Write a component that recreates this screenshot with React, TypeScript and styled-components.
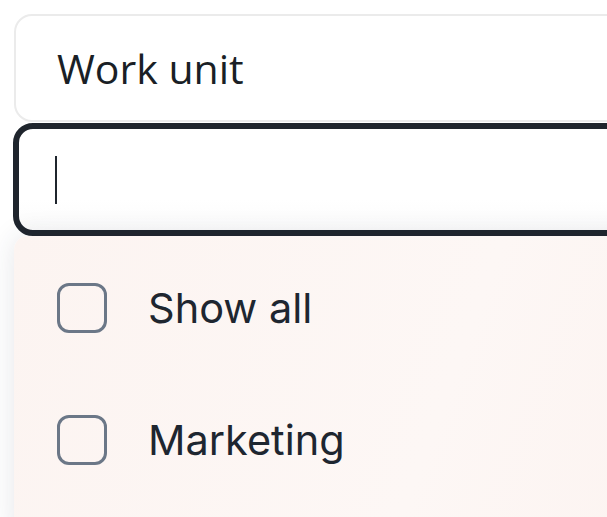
import { createGlobalStyle, styled } from 'styled-components';

const GlobalStyle = createGlobalStyle`
  html, body {
    margin: 0;
    padding: 0;
    background: #ffffff;
    overflow: hidden;
  }
`;

const Page = styled.div`
  display: flex;
  flex-direction: column;
  width: 720px;
  padding: 14px 0 0 14px;
  box-sizing: border-box;
  font-family: Inter, 'Noto Sans', sans-serif;
  color: #1e2630;
`;

const Header = styled.div`
  display: flex;
  align-items: center;
  height: 108px;
  padding-left: 41px;
  box-sizing: border-box;
  border: 2px solid #ebebeb;
  border-radius: 18px;
  background: #ffffff;
  font-family: 'Open Sans', 'Noto Sans', sans-serif;
  font-size: 41px;
  color: #1a1f26;
`;

const SearchBox = styled.div`
  display: flex;
  align-items: center;
  height: 113px;
  margin: 1px 0 0 -1px;
  padding-left: 36px;
  box-sizing: border-box;
  border: 6px solid #1f252d;
  border-radius: 20px;
  background: linear-gradient(#ffffff 70%, #fbfbfb);
`;

const Caret = styled.span`
  width: 1.5px;
  height: 48px;
  background: #1f252d;
`;

const Panel = styled.div`
  display: flex;
  flex-direction: column;
  gap: 82px;
  height: 300px;
  padding: 47px 0 0 43px;
  box-sizing: border-box;
  border-radius: 14px 0 0 0;
  background: linear-gradient(110deg, #fcf4f1, #fdf7f5 60%, #fcf3f0);
  box-shadow: 0 0 28px rgba(40, 50, 70, 0.12);
`;

const Option = styled.label`
  display: flex;
  align-items: center;
  gap: 41px;
  height: 50px;
  font-size: 41.5px;
  color: #1e2630;
`;

const Box = styled.span`
  width: 50px;
  height: 50px;
  box-sizing: border-box;
  border: 3.5px solid #6b7787;
  border-radius: 12px;
  flex-shrink: 0;
`;

const options = ['Show all', 'Marketing'];

export default function App() {
  return (
    <>
      <GlobalStyle />
      <Page>
        <Header>Work unit</Header>
        <SearchBox>
          <Caret />
        </SearchBox>
        <Panel>
          {options.map((o) => (
            <Option key={o}>
              <Box />
              {o}
            </Option>
          ))}
        </Panel>
      </Page>
    </>
  );
}
